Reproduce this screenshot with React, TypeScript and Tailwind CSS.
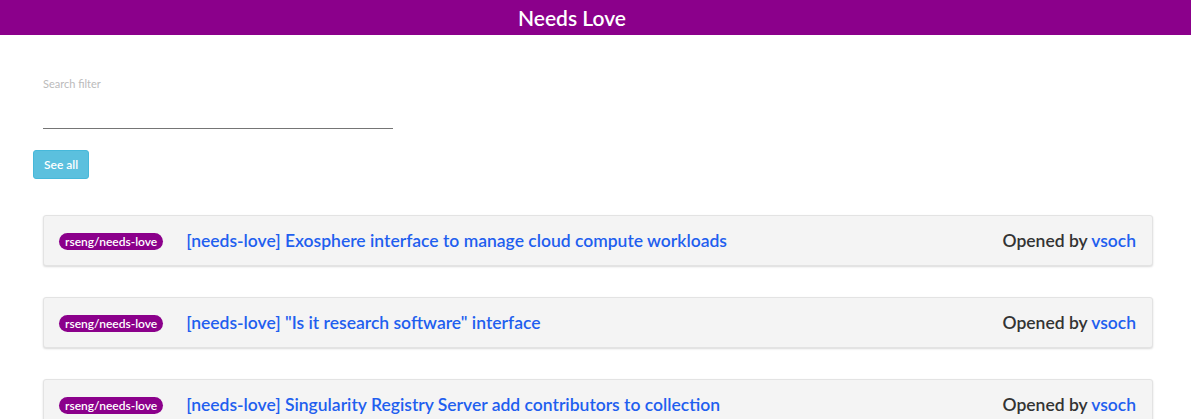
import React from "react";

const issues = [
  { title: "[needs-love] Exosphere interface to manage cloud compute workloads", user: "vsoch" },
  { title: '[needs-love] "Is it research software" interface', user: "vsoch" },
  { title: "[needs-love] Singularity Registry Server add contributors to collection", user: "vsoch" },
];

export default function App() {
  return (
    <div className="min-h-screen bg-white font-['Lato',sans-serif] text-[#333]">
      <header className="flex h-[35px] items-center justify-center bg-[#8b008b] pr-[47px]">
        <h1 className="text-[21px] font-semibold text-white">Needs Love</h1>
      </header>

      <div className="pt-[42px]">
        <div className="ml-[43px] w-[350px]">
          <label className="block text-[11px] leading-[14px] text-[#bbb]">Search filter</label>
          <input className="mt-[8px] block h-[30px] w-full border-b border-[#757575] bg-transparent text-sm outline-none" />
        </div>

        <button className="ml-[33px] mt-[21px] h-[29px] rounded-[3px] border border-[#46b8da] bg-[#5bc0de] px-[10px] text-[12px] font-semibold text-white">
          See all
        </button>

        <div className="ml-[43px] mt-[36px] flex w-[1110px] flex-col gap-[31px]">
          {issues.map((issue, i) => (
            <div
              key={i}
              className="flex h-[51px] items-center rounded-[3px] border border-[#e3e3e3] bg-[#f4f4f4] pl-[15px] pr-[16px] pt-[2px] shadow-[0_1px_2px_rgba(0,0,0,0.15)]"
            >
              <span className="rounded-full bg-[#8b008b] px-[6px] py-[1px] text-[12px] font-semibold leading-[15px] text-white">
                rseng/needs-love
              </span>
              <a className="ml-[23px] text-[17.5px] font-semibold text-[#1f5fef]">{issue.title}</a>
              <div className="ml-auto text-[17.5px] font-semibold text-[#333]">
                Opened by <a className="text-[#1f5fef]">{issue.user}</a>
              </div>
            </div>
          ))}
        </div>
      </div>
    </div>
  );
}
